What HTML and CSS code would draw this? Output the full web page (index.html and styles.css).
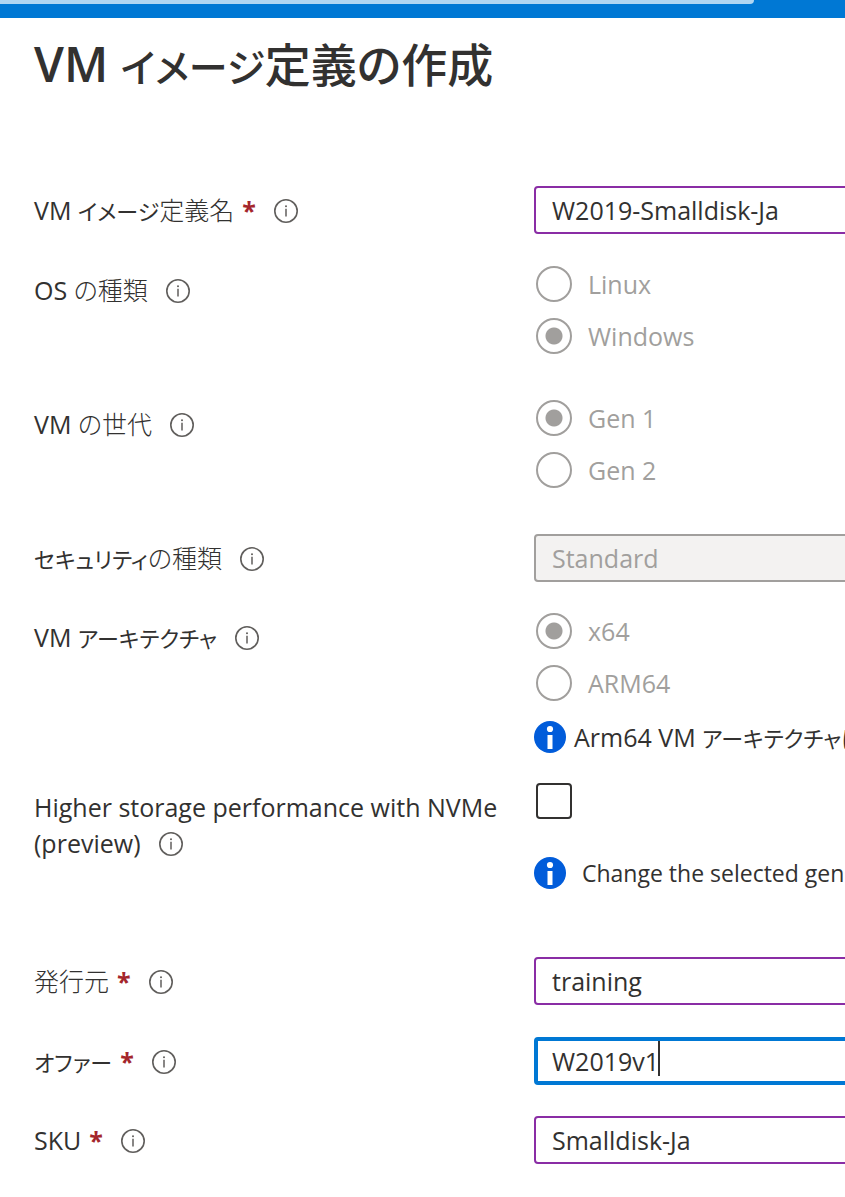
FILE: index.html
```html
<!DOCTYPE html>
<html lang="ja">
<head>
    <meta charset="UTF-8">
    <title>VM イメージ定義の作成</title>
    <link rel="stylesheet" href="styles.css">
</head>
<body>
    <svg class="defs" aria-hidden="true">
        <symbol id="info" viewBox="0 0 24 24">
            <circle cx="12" cy="12" r="11.2" fill="none" stroke="currentColor" stroke-width="1.6"/>
            <path d="M12 9.8V17.6" stroke="currentColor" stroke-width="1.5"/>
            <circle cx="12" cy="7.2" r="1" fill="currentColor"/>
        </symbol>
        <symbol id="notice" viewBox="0 0 32 32">
            <circle cx="16" cy="16" r="16" fill="#015cda"/>
            <circle cx="16" cy="8" r="3.1" fill="#fff"/>
            <rect x="13.5" y="14" width="5" height="14" fill="#fff"/>
        </symbol>
    </svg>

    <header class="top-bar"><div class="progress"></div></header>

    <main>
        <h1>VM <span class="kana">イメージ</span><span class="kanji">定義の作成</span></h1>
        <form class="form">
            <div class="row">
                <div class="label"><label for="name">VM <span class="kana">イメージ</span><span class="kanji">定義名</span></label><span class="required">*</span><svg class="info"><use href="#info"/></svg></div>
                <div class="control"><input class="text-box" type="text" id="name" value="W2019-Smalldisk-Ja"></div>
            </div>

            <div class="row row-choice" role="radiogroup" aria-labelledby="osLabel">
                <div class="label"><span id="osLabel">OS <span class="kanji">の種類</span></span><svg class="info"><use href="#info"/></svg></div>
                <div class="control radios">
                    <label><input type="radio" name="os" disabled>Linux</label>
                    <label><input type="radio" name="os" checked disabled>Windows</label>
                </div>
            </div>

            <div class="row row-choice" role="radiogroup" aria-labelledby="genLabel">
                <div class="label"><span id="genLabel">VM <span class="kanji">の世代</span></span><svg class="info"><use href="#info"/></svg></div>
                <div class="control radios">
                    <label><input type="radio" name="gen" checked disabled>Gen 1</label>
                    <label><input type="radio" name="gen" disabled>Gen 2</label>
                </div>
            </div>

            <div class="row row-tight">
                <div class="label"><label for="security"><span class="kana">セキュリティ</span><span class="kanji">の種類</span></label><svg class="info"><use href="#info"/></svg></div>
                <div class="control">
                    <select class="text-box" id="security" disabled>
                        <option>Standard</option>
                    </select>
                </div>
            </div>

            <div class="row row-arch" role="radiogroup" aria-labelledby="archLabel">
                <div class="label"><span id="archLabel">VM <span class="kana">アーキテクチャ</span></span><svg class="info"><use href="#info"/></svg></div>
                <div class="control">
                    <div class="radios">
                        <label><input type="radio" name="arch" checked disabled>x64</label>
                        <label><input type="radio" name="arch" disabled>ARM64</label>
                    </div>
                    <div class="notice notice-arch"><svg><use href="#notice"/></svg><span>Arm64 VM <span class="kana">アーキテクチャは</span></span></div>
                </div>
            </div>

            <div class="row row-nvme">
                <div class="label"><label for="nvme">Higher storage performance with NVMe (preview)</label><svg class="info"><use href="#info"/></svg></div>
                <div class="control">
                    <input type="checkbox" id="nvme">
                    <div class="notice notice-nvme"><svg><use href="#notice"/></svg><span>Change the selected gen</span></div>
                </div>
            </div>

            <div class="row">
                <div class="label"><label for="publisher"><span class="kanji">発行元</span></label><span class="required">*</span><svg class="info"><use href="#info"/></svg></div>
                <div class="control"><input class="text-box" type="text" id="publisher" value="training"></div>
            </div>

            <div class="row row-tight">
                <div class="label"><label for="offer"><span class="kana">オファー</span></label><span class="required">*</span><svg class="info"><use href="#info"/></svg></div>
                <div class="control"><input class="text-box active" type="text" id="offer" value="W2019v1"><span class="caret"></span></div>
            </div>

            <div class="row">
                <div class="label"><label for="sku">SKU</label><span class="required">*</span><svg class="info"><use href="#info"/></svg></div>
                <div class="control"><input class="text-box" type="text" id="sku" value="Smalldisk-Ja"></div>
            </div>
        </form>
    </main>
</body>
</html>
```

FILE: styles.css
```css
* {
    box-sizing: border-box;
}
body {
    margin: 0;
    background-color: #fff;
    color: #323130;
    font-family: "Open Sans", "Noto Sans CJK JP", sans-serif;
    font-size: 25px;
    line-height: 36px;
    font-feature-settings: "palt";
}
.defs {
    display: none;
}
.top-bar {
    height: 18px;
    background-color: #0078d4;
}
.progress {
    width: 754px;
    height: 4px;
    background-color: #b0d6f2;
    border-bottom-right-radius: 4px;
}
/* the controls run past the right edge of a narrow window */
main {
    padding: 16px 0 32px 34px;
    overflow: hidden;
}
h1 {
    margin: 0 0 92px;
    font-size: 48px;
    line-height: 60px;
    font-weight: 600;
}
/* kanji is set lighter, katakana a little smaller */
.kana,
.kanji {
    line-height: 1;
}
.kana {
    font-size: 22px;
}
.kanji {
    font-size: 25px;
    font-weight: 300;
}
h1 .kana,
h1 .kanji {
    font-weight: 500;
}
h1 .kana {
    font-size: 39px;
}
h1 .kanji {
    font-size: 46px;
}
.row {
    display: grid;
    grid-template-columns: 500px minmax(360px, 1fr);
    margin-bottom: 32px;
}
.row-tight {
    margin-bottom: 31px;
}
.row-choice {
    margin-bottom: 46px;
}
.row-arch {
    margin-bottom: 30px;
}
.row-nvme {
    margin-bottom: 68px;
}
.label {
    padding-top: 6px;
    padding-right: 24px;
}
.required {
    margin-left: 8px;
    color: #a4262c;
    font-weight: 700;
}
.info {
    width: 24px;
    height: 24px;
    margin-left: 18px;
    vertical-align: -3px;
    color: #605e5c;
}
.control {
    position: relative;
}
.text-box {
    display: block;
    width: 100%;
    height: 48px;
    padding: 0 16px;
    border: 2px solid #8a2da5;
    border-radius: 4px;
    background-color: #fff;
    color: #323130;
    font: inherit;
    outline: none;
}
.text-box:disabled {
    appearance: none;
    border-color: #a19f9d;
    background-color: #f3f2f1;
    color: #a19f9d;
    opacity: 1;
}
.text-box.active {
    padding: 0 14px;
    border: 4px solid #0078d4;
    caret-color: transparent;
}
.caret {
    position: absolute;
    left: 124px;
    top: 4px;
    width: 2px;
    height: 35px;
    background-color: #323130;
}
.radios {
    display: flex;
    flex-direction: column;
    gap: 16px;
    padding-left: 2px;
    color: #a19f9d;
}
.radios label {
    display: flex;
    align-items: center;
    gap: 16px;
}
input[type="radio"],
input[type="checkbox"] {
    appearance: none;
    display: block;
    width: 36px;
    height: 36px;
    margin: 0;
    border: 2px solid #a19f9d;
    border-radius: 50%;
}
input[type="radio"]:checked {
    background: radial-gradient(circle, #a19f9d 8px, transparent 9px);
}
input[type="checkbox"] {
    margin-left: 2px;
    border-color: #323130;
    border-radius: 4px;
}
.notice {
    display: flex;
    align-items: center;
    gap: 8px;
    height: 32px;
    white-space: nowrap;
}
.notice svg {
    width: 32px;
    height: 32px;
}
.notice-arch {
    margin-top: 20px;
}
.notice-nvme {
    gap: 16px;
    margin-top: 38px;
    font-size: 23px;
}
```
